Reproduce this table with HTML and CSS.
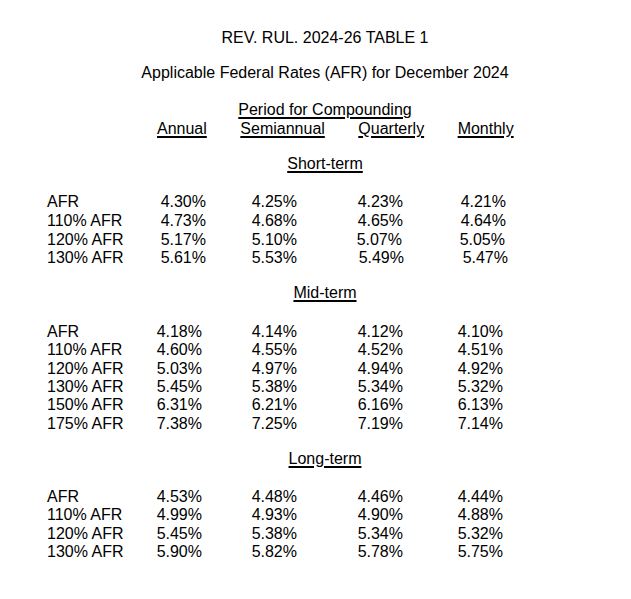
FILE: index.html
```html
<!DOCTYPE html>
<html>
<head>
<meta charset="utf-8">
<link rel="stylesheet" href="styles.css">
</head>
<body>
<div class="page">
  <div class="center title">REV. RUL. 2024-26 TABLE 1</div>
  <div class="center subtitle">Applicable Federal Rates (AFR) for December 2024</div>
  <div class="center period"><span class="u">Period for Compounding</span></div>
  <div class="heads">
    <span class="u">Annual</span>
    <span class="u">Semiannual</span>
    <span class="u">Quarterly</span>
    <span class="u">Monthly</span>
  </div>

  <div class="center section first"><span class="u">Short-term</span></div>
  <div class="rows short">
    <span class="lbl">AFR</span><span class="v v1">4.30%</span><span class="v v2">4.25%</span><span class="v v3">4.23%</span><span class="v v4">4.21%</span>
    <span class="lbl">110% AFR</span><span class="v v1">4.73%</span><span class="v v2">4.68%</span><span class="v v3">4.65%</span><span class="v v4">4.64%</span>
    <span class="lbl">120% AFR</span><span class="v v1">5.17%</span><span class="v v2">5.10%</span><span class="v v3 in1">5.07%</span><span class="v v4 in1">5.05%</span>
    <span class="lbl">130% AFR</span><span class="v v1">5.61%</span><span class="v v2">5.53%</span><span class="v v3 out1">5.49%</span><span class="v v4 out2">5.47%</span>
  </div>

  <div class="center section"><span class="u">Mid-term</span></div>
  <div class="rows">
    <span class="lbl">AFR</span><span class="v">4.18%</span><span class="v">4.14%</span><span class="v">4.12%</span><span class="v">4.10%</span>
    <span class="lbl">110% AFR</span><span class="v">4.60%</span><span class="v">4.55%</span><span class="v">4.52%</span><span class="v">4.51%</span>
    <span class="lbl">120% AFR</span><span class="v">5.03%</span><span class="v">4.97%</span><span class="v">4.94%</span><span class="v">4.92%</span>
    <span class="lbl">130% AFR</span><span class="v">5.45%</span><span class="v">5.38%</span><span class="v">5.34%</span><span class="v">5.32%</span>
    <span class="lbl">150% AFR</span><span class="v">6.31%</span><span class="v">6.21%</span><span class="v">6.16%</span><span class="v">6.13%</span>
    <span class="lbl">175% AFR</span><span class="v">7.38%</span><span class="v">7.25%</span><span class="v">7.19%</span><span class="v">7.14%</span>
  </div>

  <div class="center section"><span class="u">Long-term</span></div>
  <div class="rows">
    <span class="lbl">AFR</span><span class="v">4.53%</span><span class="v">4.48%</span><span class="v">4.46%</span><span class="v">4.44%</span>
    <span class="lbl">110% AFR</span><span class="v">4.99%</span><span class="v">4.93%</span><span class="v">4.90%</span><span class="v">4.88%</span>
    <span class="lbl">120% AFR</span><span class="v">5.45%</span><span class="v">5.38%</span><span class="v">5.34%</span><span class="v">5.32%</span>
    <span class="lbl">130% AFR</span><span class="v">5.90%</span><span class="v">5.82%</span><span class="v">5.78%</span><span class="v">5.75%</span>
  </div>
</div>
</body>
</html>
```

FILE: styles.css
```css
html, body {
  margin: 0;
  padding: 0;
  background: #ffffff;
}
.page {
  width: 631px;
  height: 599px;
  font-family: "Liberation Sans", Arial, sans-serif;
  font-size: 16px;
  line-height: 18.4px;
  color: #000;
  padding-top: 29px;
  box-sizing: border-box;
}
.center {
  text-align: center;
  padding-left: 19px;
}
.u {
  text-decoration: underline;
  text-decoration-thickness: 1.5px;
  text-underline-offset: 2px;
}
.subtitle {
  margin-top: 16.6px;
}
.period {
  margin-top: 18.6px;
}
.heads {
  display: flex;
  gap: 33.5px;
  padding-left: 157px;
  margin-top: 0.6px;
}
.section {
  margin-top: 16.5px;
}
.section.first {
  margin-top: 16.6px;
}
.rows {
  display: grid;
  grid-template-columns: 103px 52px 95px 106px 100px;
  margin-left: 47px;
  margin-top: 20px;
}
.rows.short {
  grid-auto-rows: 18.6px;
}
.lbl {
  text-align: left;
}
.v {
  justify-self: end;
}
.short .v1 { margin-right: -4px; }
.short .v4 { margin-right: -3px; }
.short .v3.in1 { margin-right: 1px; }
.short .v4.in1 { margin-right: -2px; }
.short .v3.out1 { margin-right: -1px; }
.short .v4.out2 { margin-right: -5px; }
```
